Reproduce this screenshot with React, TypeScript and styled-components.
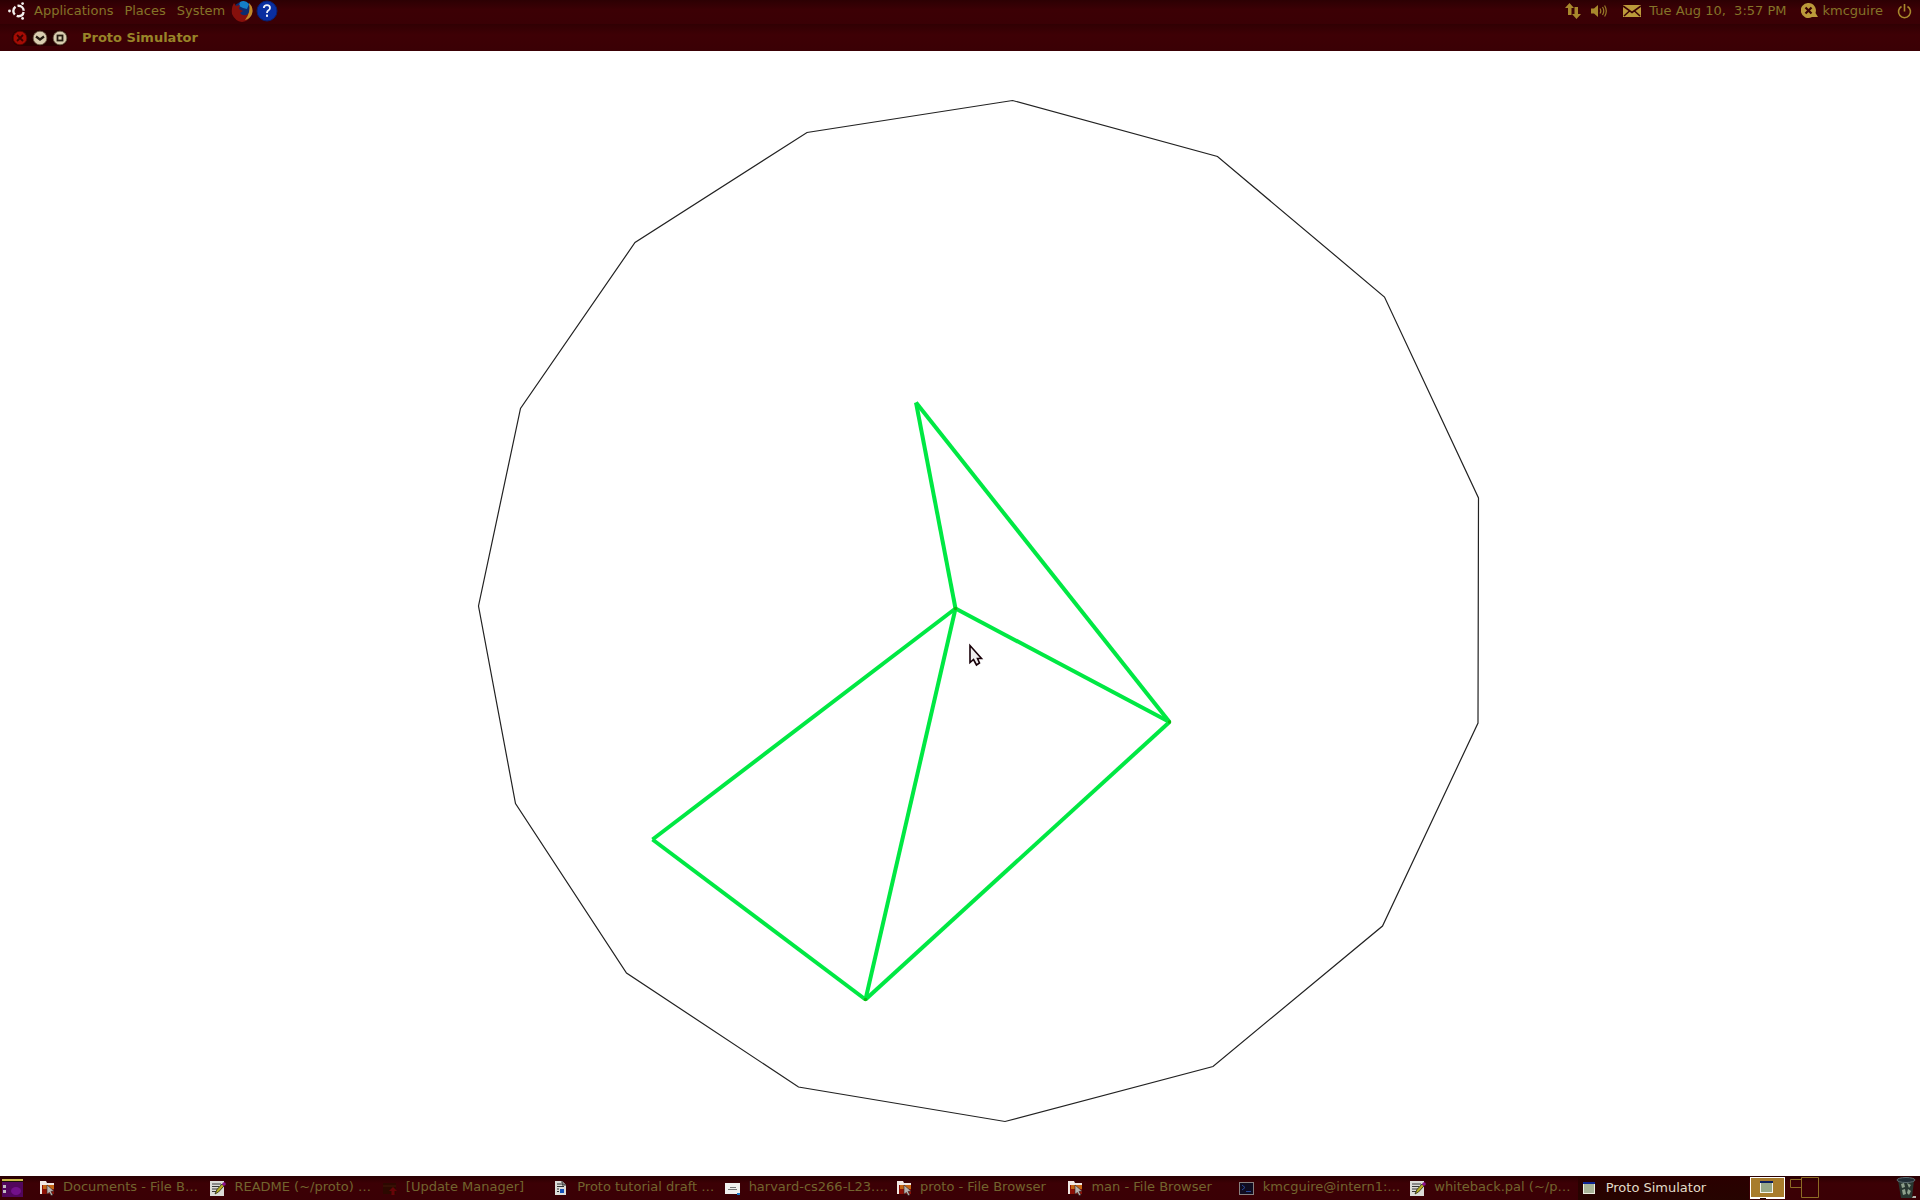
import React from "react";
import styled, { createGlobalStyle } from "styled-components";

const Global = createGlobalStyle`
  * { box-sizing: border-box; }
  body { margin: 0; background: #fff; }
  button { font: inherit; color: inherit; background: none; border: 0; padding: 0; margin: 0; }
  svg { display: block; flex: none; }
`;

const Desktop = styled.div`
  display: flex;
  flex-direction: column;
  height: 100vh;
  font: 13px/16px "DejaVu Sans", sans-serif;
  color: #847428;
`;

const TopPanel = styled.header`
  display: flex;
  align-items: center;
  justify-content: space-between;
  height: 24px;
  padding: 0 8px 2px;
  background: linear-gradient(#2c0003, #3c0005 40%, #3a0005);
`;

const Menus = styled.nav`
  display: flex;
  align-items: center;
  gap: 11px;
`;

const MenuButton = styled.button`
  display: flex;
  align-items: center;
  gap: 9px;
  height: 22px;
`;

const Launchers = styled.div`
  display: flex;
  align-items: center;
  gap: 2px;
`;

const MenuBar = styled.div`
  display: flex;
  align-items: center;
  gap: 6px;
`;

const Tray = styled.div`
  display: flex;
  align-items: center;
  gap: 14px;
`;

const TrayButton = styled.button<{ $gap?: number }>`
  display: flex;
  align-items: center;
  gap: ${(p) => p.$gap ?? 8}px;
  height: 22px;
  white-space: pre;
`;

const Indicators = styled.div`
  display: flex;
  align-items: center;
  gap: 10px;
  margin-right: 1px;
`;

const TitleBar = styled.div`
  display: flex;
  align-items: center;
  gap: 14px;
  height: 27px;
  padding: 0 12px;
  background: linear-gradient(#300003, #3e0005 40%, #3a0005);
`;

const WindowButtons = styled.div`
  display: flex;
  gap: 4px;
  border-radius: 8px;
  background: #260000;
`;

const Title = styled.h1`
  margin: 0;
  font-size: 13px;
  line-height: 16px;
  font-weight: bold;
  color: #988428;
`;

const Stage = styled.main`
  flex: 1;
  min-height: 0;
  background: #fff;
  svg { width: 100%; height: 100%; }
`;

const BottomPanel = styled.footer`
  display: flex;
  align-items: center;
  height: 24px;
  background: linear-gradient(#280002, #3c0005 30%, #3a0005);
`;

const ShowDesktop = styled.button`
  width: 35px;
  padding-left: 2px;
`;

const Tasks = styled.div`
  display: flex;
  flex: 1;
  min-width: 0;
`;

const Task = styled.button<{ $active?: boolean }>`
  display: flex;
  align-items: center;
  gap: 8px;
  flex: 1 1 0;
  min-width: 0;
  height: 24px;
  padding-left: 4px;
  white-space: nowrap;
  color: ${(p) => (p.$active ? "#e2dcc8" : "#72642e")};
  background: ${(p) => (p.$active ? "linear-gradient(#2a0000, #260400)" : "none")};
`;

const TaskLabel = styled.span<{ $active?: boolean }>`
  padding-bottom: ${(p) => (p.$active ? 0 : 2)}px;
`;

const Pager = styled.div`
  display: flex;
  align-items: center;
  padding-left: 1px;
  width: 147px;
`;

const Trash = styled.button`
  width: 24px;
`;

const Ubuntu = () => (
  <svg width="17" height="18" viewBox="0 0 17 18">
    <circle cx="10.5" cy="9" r="5.2" fill="none" stroke="#f4f0ee" strokeWidth="2.4" strokeDasharray="8.8 2.09" strokeDashoffset="-1.05" />
    <circle cx="1.5" cy="9" r="1.4" fill="#f4f0ee" />
    <circle cx="14.6" cy="1.6" r="1.4" fill="#f4f0ee" />
    <circle cx="14.6" cy="16.4" r="1.4" fill="#f4f0ee" />
  </svg>
);

const Firefox = () => (
  <svg width="23" height="22" viewBox="0 0 23 22">
    <circle cx="12" cy="11" r="9.5" fill="#0c2c70" />
    <path d="M9 2Q14-1 18 4L16 9 12 8 8 6Z" fill="#1480c8" />
    <path d="M18 3Q23 8 21 14 18 21 11 22 4 21 1 14 0 8 3 3L5 6 9 5 8 9 12 11 9 13Q12 17 17 14 21 10 18 3Z" fill="#86100c" />
    <path d="M18 3Q23 8 21 14 19 19 14 20 20 13 18 3Z" fill="#c08a28" />
  </svg>
);

const Help = () => (
  <svg width="22" height="22" viewBox="0 0 22 22">
    <circle cx="11" cy="11" r="10" fill="#0a2ea0" stroke="#082070" />
    <path d="M7.8 8Q8 5.2 11 5.2T14 8Q14 9.5 12.2 10.6 11 11.4 11 13" fill="none" stroke="#f0f2fa" strokeWidth="1.8" />
    <rect x="10" y="14.6" width="2" height="2.2" fill="#f0f2fa" />
  </svg>
);

const Network = () => (
  <svg width="16" height="16" viewBox="0 0 16 16" fill="#a8882c">
    <path d="M4.5 0L9 5H6.5V12H3V5H0ZM9.5 4H13V11H16L11.5 16 7 11H9.5Z" />
  </svg>
);

const Speaker = () => (
  <svg width="17" height="14" viewBox="0 0 17 14">
    <path d="M0 4.5H3L7 1V13L3 9.5H0Z" fill="#a8882c" />
    <path d="M9 4.5Q10.6 7 9 9.5M11.5 3Q14 7 11.5 11M13.6 1.5Q17 7 13.6 12.5" fill="none" stroke="#987a28" strokeWidth="1.2" />
  </svg>
);

const Mail = () => (
  <svg width="18" height="12" viewBox="0 0 18 12">
    <rect width="18" height="12" fill="#bc9a3a" />
    <path d="M0 1L9 7.5 18 1M1 11L6.5 6M17 11L11.5 6" fill="none" stroke="#3a0005" strokeWidth="1.6" />
  </svg>
);

const Status = () => (
  <svg width="17" height="16" viewBox="0 0 17 16">
    <path d="M7.5 0A7.5 7.5 0 0 1 14.5 10L17 14H11A7.5 7.5 0 1 1 7.5 0Z" fill="#bc9a3a" />
    <path d="M4.5 4.5L10.5 10.5M10.5 4.5L4.5 10.5" stroke="#3a0005" strokeWidth="2.2" />
  </svg>
);

const Power = () => (
  <svg width="15" height="16" viewBox="0 0 15 16" fill="none" stroke="#a8882c" strokeWidth="1.6">
    <path d="M4.5 3.5A6 6 0 1 0 10.5 3.5M7.5 1V8.5" />
  </svg>
);

const WinGlyph = ({ kind }: { kind: "close" | "min" | "max" }) => (
  <svg width="16" height="16" viewBox="0 0 16 16">
    <circle cx="8" cy="8" r="6.8" fill={kind === "close" ? "#a40c04" : "#d8ceb0"} stroke={kind === "close" ? "#5c0400" : "#6e6048"} strokeWidth=".8" />
    <g fill="none" stroke={kind === "close" ? "#3c0000" : "#241c10"} strokeWidth="1.8">
      {kind === "close" && <path d="M5 5L11 11M11 5L5 11" />}
      {kind === "min" && <path d="M4 6.5L8 9.5 12 6.5" strokeWidth="2.2" />}
      {kind === "max" && <rect x="5.5" y="5.5" width="5" height="5" />}
    </g>
  </svg>
);

const DesktopIcon = () => (
  <svg width="21" height="18" viewBox="0 0 21 18">
    <rect width="21" height="18" fill="#52065c" />
    <ellipse cx="14" cy="12" rx="5" ry="4" fill="#72108a" />
    <rect width="21" height="2" fill="#c8b848" />
    <rect y="2" width="21" height="1" fill="#181008" />
    <path d="M1 6h3v3H1zM1 11h3v3H1z" fill="#c0b8c0" />
  </svg>
);

type Kind = "folder" | "edit" | "update" | "doc" | "pdf" | "term" | "window";

const WindowShape = () => (
  <>
    <rect x="1.5" y="3.5" width="11" height="10" fill="#a8b498" stroke="#eceee0" />
    <rect x="1" y="2" width="12" height="2" fill="#0c2494" />
  </>
);

const TaskIcon = ({ kind }: { kind: Kind }) => (
  <svg width="16" height="16" viewBox="0 0 16 16">
    {kind === "folder" && (
      <>
        <path d="M1 14V1H7L8 3H15V5H5V14Z" fill="#f0e8e4" />
        <path d="M3 5H15V14H3Z" fill="#8c1006" />
        <path d="M4 5H15V9H4Z" fill="#c46414" />
        <path d="M8 5L15 11 12 11.5 14 15 12 15.5 10.5 12.5 8 14Z" fill="#b8b4b0" stroke="#302020" strokeWidth=".6" />
      </>
    )}
    {kind === "edit" && (
      <>
        <path d="M0 1H14V16H0Z" fill="#dcdcd8" />
        <path d="M2 4H11M2 6.5H9M2 9H8M2 11.5H6" stroke="#383838" />
        <path d="M5 14L7 9.5 12 4 14 6 8.5 12Z" fill="#b8b020" stroke="#242410" strokeWidth=".8" />
        <circle cx="14" cy="4" r="1.8" fill="#901090" />
      </>
    )}
    {kind === "update" && (
      <>
        <path d="M1 3H14V14H1Z" fill="#2c0800" />
        <path d="M1 6H14" stroke="#401808" />
        <path d="M11 7L15 11H12.5V15H9.5V11H7Z" fill="#680408" />
      </>
    )}
    {kind === "doc" && (
      <>
        <path d="M2 1H9L13 5V15H2Z" fill="#dcdcd8" />
        <path d="M9 1V5H13" fill="#888" stroke="#333" />
        <path d="M4 4H8M4 6.5H11M4 9H6M4 11.5H6" stroke="#303030" />
        <rect x="7" y="9" width="4" height="4" fill="#1450b8" />
      </>
    )}
    {kind === "pdf" && (
      <>
        <path d="M0 3H15V14H0Z" fill="#f0f0ee" />
        <path d="M5 7.5H11M3 9.5H12" stroke="#777" />
        <path d="M12 13H15V15H12Z" fill="#1878c8" />
      </>
    )}
    {kind === "term" && (
      <>
        <rect x=".5" y="2.5" width="14" height="12" fill="#100c20" stroke="#888080" />
        <path d="M3 5L6 7.5 3 10M7 11.5H12" fill="none" stroke="#28489c" />
      </>
    )}
    {kind === "window" && <WindowShape />}
  </svg>
);

const Workspaces = () => (
  <svg width="70" height="22" viewBox="0 0 70 22">
    <rect x=".5" y=".5" width="34" height="20" fill="#a87c2c" stroke="#fff" />
    <path d="M0 21H35" stroke="#fff" strokeWidth="2" />
    <path d="M10 21.5H16" stroke="#200000" />
    <rect x="10.5" y="5.5" width="12" height="10" fill="#98a888" stroke="#f4f4ec" />
    <rect x="10" y="4" width="13" height="2" fill="#0c2060" />
    <path d="M51.5 .5H68.500V20.5H51.5ZM40.5 2.5H51.5V10.5H40.5Z" fill="none" stroke="#8c6c24" />
  </svg>
);

const TrashIcon = () => (
  <svg width="21" height="22" viewBox="0 0 21 22">
    <path d="M2 3H18L16 21H5Z" fill="#283630" />
    <ellipse cx="10" cy="3" rx="9" ry="2.5" fill="#202c34" stroke="#5c6c70" />
    <path d="M5 7L8 6 9 10 6 11ZM11 6L15 8 13 11ZM6 13L9 12 10 17 7 18ZM12 12L15 14 13 18 11 16Z" fill="#8ea08c" />
    <path d="M17 19H20V21H16Z" fill="#b0b0a8" />
  </svg>
);

const tasks: { kind: Kind; label: string; active?: boolean }[] = [
  { kind: "folder", label: "Documents - File B…" },
  { kind: "edit", label: "README (~/proto) …" },
  { kind: "update", label: "[Update Manager]" },
  { kind: "doc", label: "Proto tutorial draft …" },
  { kind: "pdf", label: "harvard-cs266-L23.…" },
  { kind: "folder", label: "proto - File Browser" },
  { kind: "folder", label: "man - File Browser" },
  { kind: "term", label: "kmcguire@intern1:…" },
  { kind: "edit", label: "whiteback.pal (~/p…" },
  { kind: "window", label: "Proto Simulator", active: true },
];

const boundary =
  "1012.5,100.5 1217.5,156.5 1384.5,297 1478.5,498 1478,723 1382.5,926 1213,1066.5 1005,1121.5 798.5,1087 626.5,973 515.5,803.5 478.5,606 520.5,408.5 635,242.5 807,132.5";

type Point = [number, number];
const top: Point = [916, 402.5];
const hub: Point = [955.5, 608.5];
const right: Point = [1169.5, 722];
const left: Point = [652.5, 839.5];
const bottom: Point = [865.5, 999.5];

const links: [Point, Point][] = [
  [top, hub],
  [top, right],
  [hub, right],
  [hub, left],
  [hub, bottom],
  [left, bottom],
  [bottom, right],
];

export default function App() {
  return (
    <Desktop>
      <Global />
      <TopPanel>
        <MenuBar>
          <Menus>
            <MenuButton><Ubuntu />Applications</MenuButton>
            <MenuButton>Places</MenuButton>
            <MenuButton>System</MenuButton>
          </Menus>
          <Launchers>
            <button aria-label="Firefox"><Firefox /></button>
            <button aria-label="Help"><Help /></button>
          </Launchers>
        </MenuBar>
        <Tray>
          <Indicators>
            <TrayButton aria-label="Network"><Network /></TrayButton>
            <TrayButton aria-label="Volume"><Speaker /></TrayButton>
          </Indicators>
          <TrayButton><Mail />{"Tue Aug 10,  3:57 PM"}</TrayButton>
          <TrayButton $gap={5}><Status />kmcguire</TrayButton>
          <TrayButton aria-label="Shut down"><Power /></TrayButton>
        </Tray>
      </TopPanel>
      <TitleBar>
        <WindowButtons>
          <button aria-label="Close"><WinGlyph kind="close" /></button>
          <button aria-label="Minimize"><WinGlyph kind="min" /></button>
          <button aria-label="Maximize"><WinGlyph kind="max" /></button>
        </WindowButtons>
        <Title>Proto Simulator</Title>
      </TitleBar>
      <Stage>
        <svg viewBox="0 51 1920 1125" role="img" aria-label="Device network">
          <polygon points={boundary} fill="none" stroke="#222" strokeWidth="1.2" />
          <g stroke="#00e843" strokeWidth="4">
            {links.map(([a, b], i) => (
              <line key={i} x1={a[0]} y1={a[1]} x2={b[0]} y2={b[1]} />
            ))}
          </g>
          {[hub, right, bottom].map(([x, y]) => (
            <circle key={x} cx={x} cy={y} r="1.8" fill="#10b810" />
          ))}
          <path d="M970 645.5V662.5L973.5 659.5 976.5 665 979.5 663 977.5 658.5H981.5Z" fill="#eee" stroke="#180008" strokeWidth="1.6" />
        </svg>
      </Stage>
      <BottomPanel>
        <ShowDesktop aria-label="Show desktop"><DesktopIcon /></ShowDesktop>
        <Tasks>
          {tasks.map((t) => (
            <Task key={t.label} $active={t.active}>
              <TaskIcon kind={t.kind} />
              <TaskLabel $active={t.active}>{t.label}</TaskLabel>
            </Task>
          ))}
        </Tasks>
        <Pager><Workspaces /></Pager>
        <Trash aria-label="Trash"><TrashIcon /></Trash>
      </BottomPanel>
    </Desktop>
  );
}
